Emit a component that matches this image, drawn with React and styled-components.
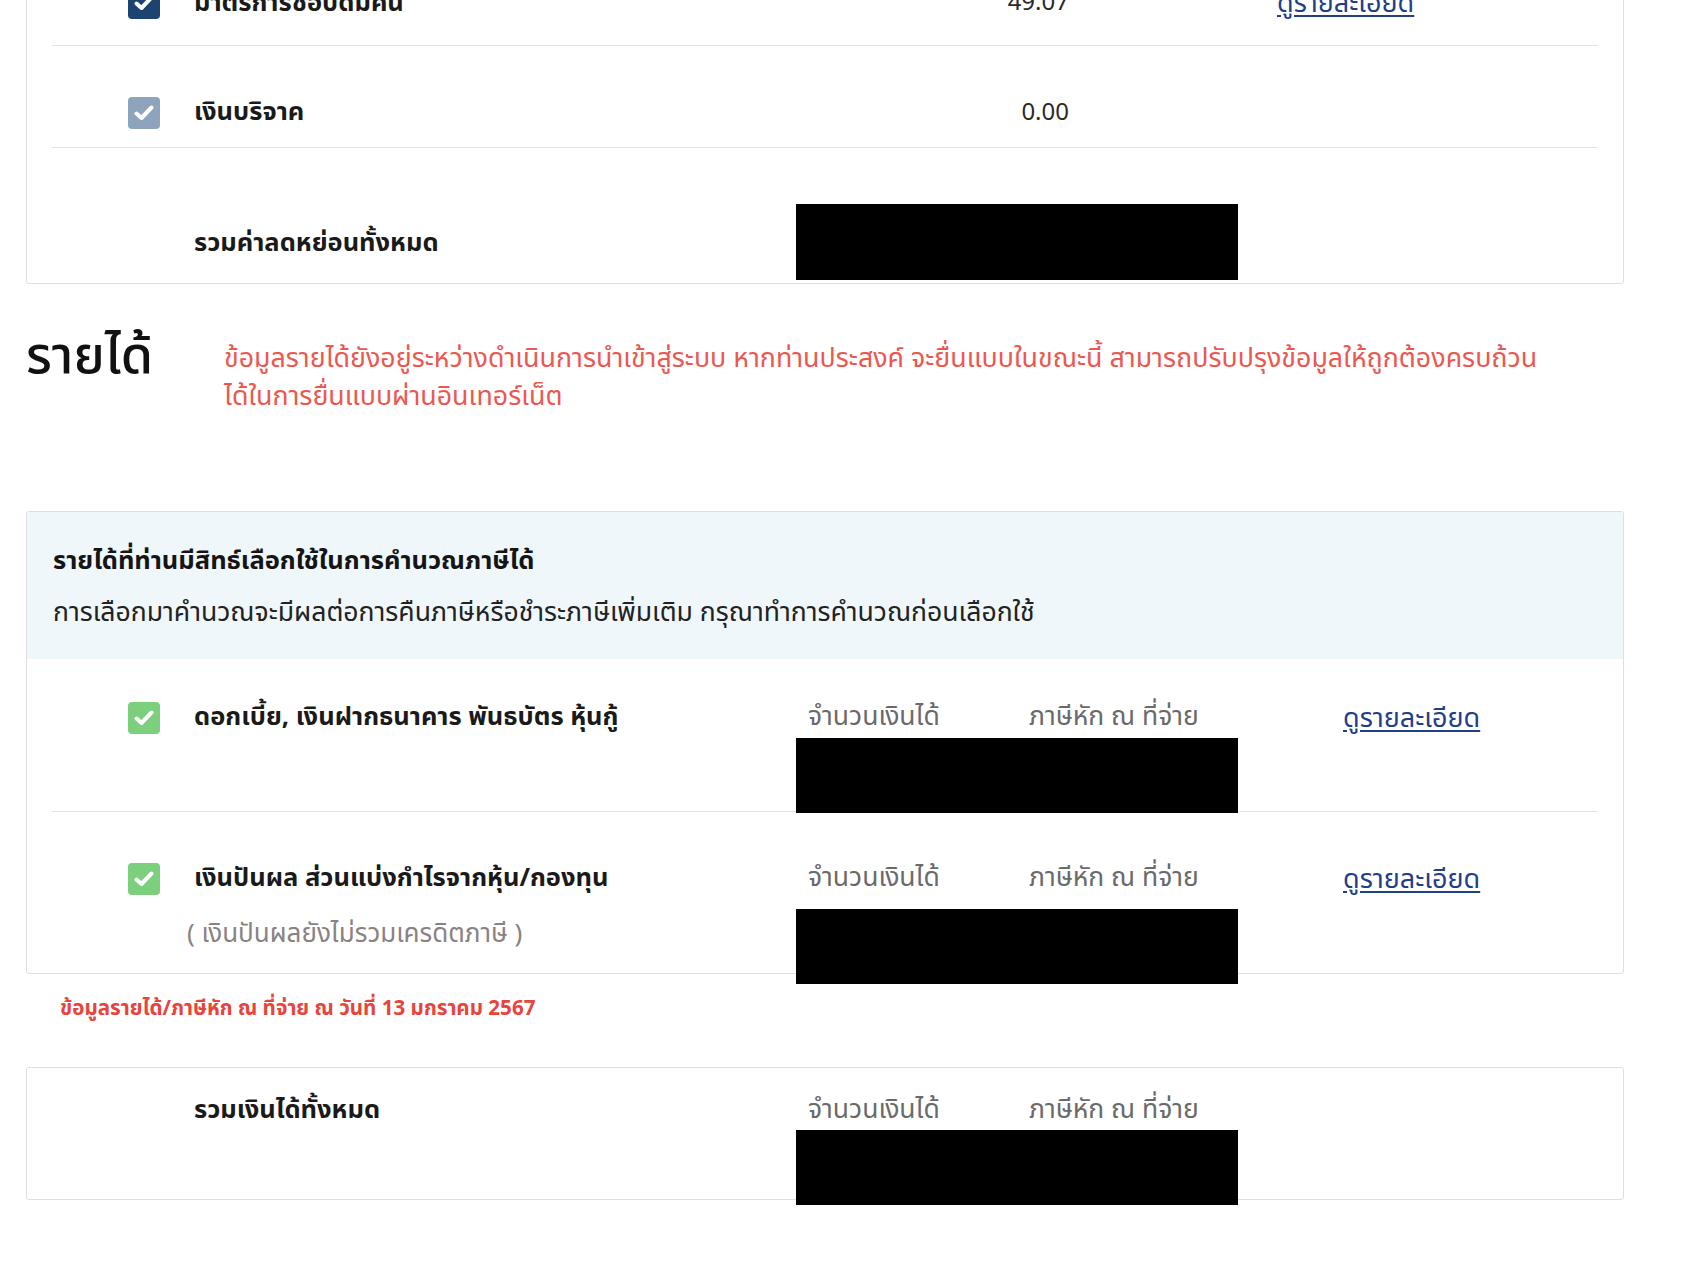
import React from 'react';
import styled, { createGlobalStyle } from 'styled-components';

const GlobalStyle = createGlobalStyle`
  html, body {
    margin: 0;
    background: #fff;
  }
  body {
    font-family: "Noto Sans Thai", "Noto Sans", "Liberation Sans", sans-serif;
    color: #222;
  }
`;

const Page = styled.div`
  width: 1686px;
  box-sizing: border-box;
  padding: 0 62px 80px 26px;
  margin-top: -57px;
`;

const Card = styled.div`
  border: 1px solid #dfdfdf;
  border-radius: 3px;
  background: #fff;
`;

const Row = styled.div`
  display: grid;
  grid-template-columns: 142px 602px 442px 1fr;
  align-items: start;
  height: ${p => p.height}px;
  box-sizing: border-box;
  margin: 0 25px;
  padding-top: ${p => p.padTop}px;
  border-bottom: ${p => (p.last ? 'none' : '1px solid #e2e2e2')};
`;

const BoxCell = styled.div`
  padding-left: 76px;
`;

const Check = styled.span`
  display: flex;
  align-items: center;
  justify-content: center;
  width: 32px;
  height: 32px;
  border-radius: 4px;
  background: ${p => p.color};
`;

const Label = styled.div`
  font-size: 25.5px;
  font-weight: 700;
  line-height: 30px;
  color: #1a1a1a;
  white-space: nowrap;
  padding-top: ${p => p.padTop || 0}px;
`;

const Note = styled.div`
  margin: 26px 0 0 -7px;
  font-size: 26px;
  line-height: 30px;
  color: #8a8282;
  white-space: nowrap;
`;

const Amount = styled.div`
  width: 273px;
  text-align: right;
  font-size: 24px;
  line-height: 30px;
  color: #2a2a2a;
  padding-top: 1px;
`;

const ValueCell = styled.div`
  display: flex;
  flex-direction: column;
  gap: ${p => p.gap}px;
`;

const ColHeads = styled.div`
  display: grid;
  grid-template-columns: 221px 221px;
`;

const ColHead = styled.span`
  padding-left: 12px;
  font-size: 26.5px;
  line-height: 30px;
  color: #6a6a6a;
  white-space: nowrap;
`;

const Redacted = styled.div`
  width: 442px;
  height: ${p => p.h || 75}px;
  background: #000;
`;

const DetailLink = styled.a`
  justify-self: start;
  margin-left: ${p => p.indent}px;
  padding-top: ${p => p.padTop || 0}px;
  font-size: 27px;
  line-height: 30px;
  color: #1f3f86;
  text-decoration: underline;
  text-underline-offset: 3px;
  white-space: nowrap;
  cursor: pointer;
`;

const Section = styled.div`
  display: flex;
  align-items: flex-start;
  padding: 36px 0 0;
  height: 227px;
  box-sizing: border-box;
`;

const Title = styled.h2`
  width: 198px;
  flex: none;
  margin: 0;
  padding-top: 5px;
  font-size: 52px;
  font-weight: 500;
  line-height: 64px;
  color: #111;
`;

const Warning = styled.p`
  margin: 20px 0 0;
  font-size: 26.8px;
  line-height: 38px;
  color: #ec5750;
  white-space: nowrap;
`;

const IncomeHeader = styled.div`
  height: 147px;
  box-sizing: border-box;
  padding: 33px 26px 0;
  background: #eff7fa;
  border-radius: 3px 3px 0 0;
`;

const HeaderTitle = styled.div`
  font-size: 25.5px;
  font-weight: 700;
  line-height: 32px;
  color: #151515;
`;

const HeaderText = styled.div`
  margin-top: 20px;
  font-size: 26.6px;
  line-height: 32px;
  color: #222;
`;

const Footnote = styled.div`
  height: 93px;
  box-sizing: border-box;
  padding: 21px 0 0 34px;
  font-size: 20.6px;
  font-weight: 700;
  line-height: 28px;
  color: #e8443b;
`;

const Tick = () => (
  <svg width="20" height="16" viewBox="0 0 20 16">
    <path
      d="M2.5 8.5 L7.5 13 L17.5 2.5"
      fill="none"
      stroke="#fff"
      strokeWidth="4"
      strokeLinecap="round"
      strokeLinejoin="round"
    />
  </svg>
);

const Checkbox = ({ color }) => (
  <BoxCell>
    <Check color={color}>
      <Tick />
    </Check>
  </BoxCell>
);

const Amounts = ({ gap = 6 }) => (
  <ValueCell gap={gap}>
    <ColHeads>
      <ColHead>จำนวนเงินได้</ColHead>
      <ColHead>ภาษีหัก ณ ที่จ่าย</ColHead>
    </ColHeads>
    <Redacted h={75} />
  </ValueCell>
);

const App = () => (
  <>
    <GlobalStyle />
    <Page>
      <Card>
        <Row height={102} padTop={43}>
          <Checkbox color="#1d4471" />
          <Label padTop={1}>มาตรการช้อปดีมีคืน</Label>
          <Amount>49.07</Amount>
          <DetailLink indent={39} padTop={2}>ดูรายละเอียด</DetailLink>
        </Row>
        <Row height={102} padTop={51}>
          <Checkbox color="#8ea4bd" />
          <Label padTop={-1}>เงินบริจาค</Label>
          <Amount>0.00</Amount>
          <span />
        </Row>
        <Row height={135} padTop={56} last>
          <span />
          <Label padTop={24}>รวมค่าลดหย่อนทั้งหมด</Label>
          <Redacted h={76} />
          <span />
        </Row>
      </Card>

      <Section>
        <Title>รายได้</Title>
        <Warning>
          ข้อมูลรายได้ยังอยู่ระหว่างดำเนินการนำเข้าสู่ระบบ หากท่านประสงค์ จะยื่นแบบในขณะนี้ สามารถปรับปรุงข้อมูลให้ถูกต้องครบถ้วน
          <br />
          ได้ในการยื่นแบบผ่านอินเทอร์เน็ต
        </Warning>
      </Section>

      <Card>
        <IncomeHeader>
          <HeaderTitle>รายได้ที่ท่านมีสิทธ์เลือกใช้ในการคำนวณภาษีได้</HeaderTitle>
          <HeaderText>
            การเลือกมาคำนวณจะมีผลต่อการคืนภาษีหรือชำระภาษีเพิ่มเติม กรุณาทำการคำนวณก่อนเลือกใช้
          </HeaderText>
        </IncomeHeader>
        <Row height={153} padTop={43}>
          <Checkbox color="#7bcf7d" />
          <Label padTop={-1}>ดอกเบี้ย, เงินฝากธนาคาร พันธบัตร หุ้นกู้</Label>
          <Amounts gap={6} />
          <DetailLink indent={105} padTop={2}>ดูรายละเอียด</DetailLink>
        </Row>
        <Row height={161} padTop={51} last>
          <Checkbox color="#7bcf7d" />
          <div>
            <Label padTop={-1}>เงินปันผล ส่วนแบ่งกำไรจากหุ้น/กองทุน</Label>
            <Note>( เงินปันผลยังไม่รวมเครดิตภาษี )</Note>
          </div>
          <Amounts gap={16} />
          <DetailLink indent={105} padTop={2}>ดูรายละเอียด</DetailLink>
        </Row>
      </Card>

      <Footnote>ข้อมูลรายได้/ภาษีหัก ณ ที่จ่าย ณ วันที่ 13 มกราคม 2567</Footnote>

      <Card>
        <Row height={131} padTop={27} last>
          <span />
          <Label padTop={0}>รวมเงินได้ทั้งหมด</Label>
          <Amounts gap={5} />
          <span />
        </Row>
      </Card>
    </Page>
  </>
);

export default App;
